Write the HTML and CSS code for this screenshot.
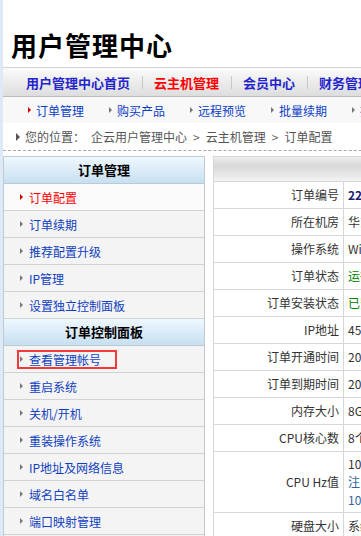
FILE: index.html
```html
<!DOCTYPE html>
<html lang="zh-CN">
<head>
    <meta charset="UTF-8">
    <meta name="viewport" content="width=device-width, initial-scale=1.0">
    <title>用户管理中心 - 订单配置</title>
    <link rel="stylesheet" href="styles.css">
</head>
<body>
    <div class="page">
        <div class="top">
            <h1>用户管理中心</h1>
        </div>

        <div class="nav">
            <a href="#">用户管理中心首页</a>
            <a href="#" class="on">云主机管理</a>
            <a href="#">会员中心</a>
            <a href="#">财务管理</a>
            <a href="#">域名管理</a>
        </div>

        <div class="subnav">
            <a href="#" class="on">订单管理</a>
            <a href="#">购买产品</a>
            <a href="#">远程预览</a>
            <a href="#">批量续期</a>
            <a href="#">批量升级</a>
        </div>

        <div class="crumb">
            <span class="here">您的位置：</span>
            <a href="#">企云用户管理中心</a>
            <span class="gt">&gt;</span>
            <a href="#">云主机管理</a>
            <span class="gt">&gt;</span>
            <span>订单配置</span>
        </div>

        <div class="main">
            <div class="side">
                <h3>订单管理</h3>
                <ul>
                    <li class="first"><a href="#" class="on">订单配置</a></li>
                    <li><a href="#">订单续期</a></li>
                    <li><a href="#">推荐配置升级</a></li>
                    <li><a href="#">IP管理</a></li>
                    <li><a href="#">设置独立控制面板</a></li>
                </ul>
                <h3>订单控制面板</h3>
                <ul>
                    <li><a href="#" class="marked">查看管理帐号</a></li>
                    <li><a href="#">重启系统</a></li>
                    <li><a href="#">关机/开机</a></li>
                    <li><a href="#">重装操作系统</a></li>
                    <li><a href="#">IP地址及网络信息</a></li>
                    <li><a href="#">域名白名单</a></li>
                    <li><a href="#">端口映射管理</a></li>
                    <li><a href="#">远程桌面端口</a></li>
                </ul>
            </div>

            <table class="info">
                <tr class="head"><th colspan="2"></th></tr>
                <tr><td class="k">订单编号</td><td class="v"><b class="no">22102409051877</b></td></tr>
                <tr><td class="k">所在机房</td><td class="v">华东电信机房</td></tr>
                <tr><td class="k">操作系统</td><td class="v">Windows 2008 R2 企业版 64位</td></tr>
                <tr><td class="k">订单状态</td><td class="v ok">运行中</td></tr>
                <tr><td class="k">订单安装状态</td><td class="v ok">已安装</td></tr>
                <tr><td class="k">IP地址</td><td class="v">45.125.46.18</td></tr>
                <tr><td class="k">订单开通时间</td><td class="v">2022-10-24 09:05:12</td></tr>
                <tr><td class="k">订单到期时间</td><td class="v">2023-10-24 09:05:12</td></tr>
                <tr><td class="k">内存大小</td><td class="v">8G</td></tr>
                <tr><td class="k">CPU核心数</td><td class="v">8个</td></tr>
                <tr class="tall"><td class="k">CPU Hz值</td><td class="v">10000 MHz<br><span class="note">注：CPU Hz值为最大可用频率</span><br><span class="note">10000 MHz = 10 GHz</span></td></tr>
                <tr><td class="k">硬盘大小</td><td class="v">系统盘 50G，数据盘 100G</td></tr>
            </table>
        </div>
    </div>
</body>
</html>
```

FILE: styles.css
```css
html {
    overflow: hidden;
}

body {
    margin: 0;
    background-color: #dce9f6;
    font-family: "Noto Sans CJK SC", sans-serif;
    font-size: 12px;
    color: #333;
}

a {
    text-decoration: none;
}

.page {
    margin-left: 3px;
    width: 980px;
    min-height: 600px;
    background-color: white;
}

/* title */
.top h1 {
    margin: 0;
    padding: 27px 0 0 8px;
    height: 40px;
    line-height: 35px;
    font-size: 26px;
    font-weight: bold;
    letter-spacing: 1px;
    color: black;
}

/* main nav */
.nav {
    display: flex;
    align-items: center;
    height: 28px;
    padding-left: 12px;
    border-top: 1px solid #d0d0d0;
    border-bottom: 1px solid #bcbcbc;
    background: linear-gradient(#fbfbfb, #dddddd);
}

.nav a {
    padding: 0 12px 0 11px;
    border-right: 1px solid #c8c8c8;
    line-height: 13px;
    font-size: 13px;
    font-weight: bold;
    color: #2424cc;
}

.nav a.on {
    color: #ff0000;
}

/* sub nav */
.subnav {
    display: flex;
    align-items: center;
    gap: 25px;
    height: 26px;
    padding-left: 25px;
    background-color: #f8f8f8;
}

.subnav a {
    display: flex;
    align-items: center;
    gap: 5px;
    color: #0b3cc8;
}

.subnav a::before {
    content: "";
    border-left: 3px solid #777;
    border-top: 3px solid transparent;
    border-bottom: 3px solid transparent;
}

.subnav a.on::before {
    border-left-color: #d00000;
}

/* breadcrumb */
.crumb {
    display: flex;
    align-items: center;
    height: 27px;
    padding-left: 13px;
    border-bottom: 1px dashed #a8a8a8;
    color: #555;
}

.crumb a {
    color: #555;
}

.crumb .here {
    display: flex;
    align-items: center;
    gap: 5px;
    margin-right: 6px;
}

.crumb .here::before {
    content: "";
    border-left: 4px solid #555;
    border-top: 4px solid transparent;
    border-bottom: 4px solid transparent;
}

.crumb .gt {
    margin: 0 6px;
    color: #666;
}

/* content */
.main {
    display: flex;
    align-items: flex-start;
    gap: 8px;
    margin-top: 5px;
}

.side {
    width: 200px;
    border: 1px solid #c3cad1;
    border-bottom: none;
}

.side h3 {
    margin: 0;
    height: 26px;
    line-height: 26px;
    text-align: center;
    font-size: 13px;
    font-weight: bold;
    color: black;
    background: linear-gradient(#eff8ff, #c7dff0);
    border-bottom: 1px solid #b9cbd9;
}

.side ul {
    margin: 0;
    padding: 0;
    list-style: none;
}

.side li a {
    position: relative;
    display: flex;
    align-items: center;
    gap: 6px;
    height: 26px;
    padding-left: 16px;
    border-bottom: 1px solid #d2d2d2;
    background-color: #f4f4f4;
    color: #1040c0;
}

.side li.first a {
    background-color: #fafafa;
}

.side li a::before {
    content: "";
    border-left: 3px solid #777;
    border-top: 3px solid transparent;
    border-bottom: 3px solid transparent;
}

.side li a.on {
    color: #ff0000;
}

.side li a.on::before {
    border-left-color: #d00000;
}

.side li a.marked::after {
    content: "";
    position: absolute;
    left: 13px;
    top: 4px;
    width: 96px;
    height: 15px;
    border: 2px solid #f23a3a;
}

/* info table */
.info {
    width: 740px;
    border-collapse: collapse;
    border: 1px solid #cccccc;
}

.info td, .info th {
    border: 1px solid #d6d6d6;
    padding: 0 4px;
    height: 26px;
    line-height: 18px;
}

.info .head th {
    height: 24px;
    background: linear-gradient(#ebebeb, #d8d8d8 35%, #f4f4f4);
}

.info td.k {
    width: 121px;
    text-align: right;
    color: #333;
}

.info td.v {
    text-align: left;
    white-space: nowrap;
}

.info .no {
    color: #1b1b70;
}

.info .ok {
    color: #008000;
}

.info .tall td {
    height: 60px;
}

.info .note {
    color: #336699;
}
```
